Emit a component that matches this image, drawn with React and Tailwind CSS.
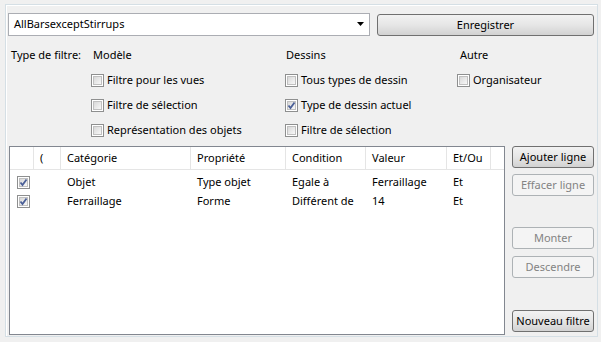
import React from "react";

const F = { fontFamily: '"Noto Sans", "Open Sans", sans-serif' };

function Check({ checked }) {
  return (
    <span className="relative inline-block w-[13px] h-[13px] border border-[#8e8f8f] bg-white shrink-0">
      <span className="absolute inset-[1px] bg-gradient-to-br from-[#d8d8d8] to-[#f8f8f8] border border-[#c0c0c0]" />
      {checked && (
        <svg className="absolute inset-0" width="11" height="11" viewBox="0 0 11 11">
          <path d="M2.5 5.5 L4.5 8 L8.5 2.5" fill="none" stroke="#4a5f97" strokeWidth="1.8" />
        </svg>
      )}
    </span>
  );
}

function CB({ label, checked }) {
  return (
    <div className="flex items-center h-[25px]">
      <Check checked={checked} />
      <span className="ml-[3px]">{label}</span>
    </div>
  );
}

function Btn({ children, disabled, className = "" }) {
  return (
    <div
      className={
        "h-[22px] flex items-center justify-center whitespace-nowrap rounded-[3px] border " +
        (disabled
          ? "border-[#adb2b5] bg-[#f4f4f4] text-[#838383] "
          : "border-[#707070] bg-gradient-to-b from-[#f2f2f2] via-[#e6e6e6] to-[#d2d2d2] text-black ") +
        className
      }
    >
      {children}
    </div>
  );
}

export default function App() {
  const cols = [
    { w: 24, t: "" },
    { w: 27, t: "(" },
    { w: 130, t: "Catégorie" },
    { w: 95, t: "Propriété" },
    { w: 80, t: "Condition" },
    { w: 81, t: "Valeur" },
    { w: 44, t: "Et/Ou" },
  ];
  const rows = [
    ["Objet", "Type objet", "Egale à", "Ferraillage", "Et"],
    ["Ferraillage", "Forme", "Différent de", "14", "Et"],
  ];
  return (
    <div className="w-[601px] h-[342px] bg-[#f0f0f0] pt-[4px] pl-[5px] text-[11px] text-black" style={F}>
      <div className="w-[593px] h-[333px] border border-[#d5dfe5] shadow-[inset_1px_1px_0_#ffffff] flex flex-col">
        {/* row 1 */}
        <div className="flex items-start mt-[8px] ml-[2px]">
          <div className="relative w-[362px] h-[23px] bg-white border border-[#abadb3] flex items-center pl-[5px]">
            AllBarsexceptStirrups
            <svg className="absolute right-[4px] top-[8px]" width="8" height="5" viewBox="0 0 8 5">
              <path d="M0 0 H7 L3.5 4 Z" fill="#000" />
            </svg>
          </div>
          <Btn className="ml-[7px] mt-[1px] w-[217px]">Enregistrer</Btn>
        </div>
        {/* filter section */}
        <div className="flex mt-[11px]">
          <div className="w-[85px] pl-[5px] h-[16px] leading-[16px]">Type de filtre:</div>
          <div className="w-[194px]">
            <div className="h-[16px] leading-[16px] pl-[2px] mb-[5px]">Modèle</div>
            <CB label="Filtre pour les vues" />
            <CB label="Filtre de sélection" />
            <CB label="Représentation des objets" />
          </div>
          <div className="w-[172px]">
            <div className="h-[16px] leading-[16px] pl-[1px] mb-[5px]">Dessins</div>
            <CB label="Tous types de dessin" />
            <CB label="Type de dessin actuel" checked />
            <CB label="Filtre de sélection" />
          </div>
          <div>
            <div className="h-[16px] leading-[16px] pl-[3px] mb-[5px]">Autre</div>
            <CB label="Organisateur" />
          </div>
        </div>
        {/* table + buttons */}
        <div className="flex mt-[3px] ml-[3px]">
          <div className="w-[496px] h-[189px] bg-white border border-[#828790] flex flex-col">
            <div className="flex h-[23px] border-b border-[#e5e5e5] mb-[3px]">
              {cols.map((c, i) => (
                <div
                  key={i}
                  className="h-full flex items-center pl-[6px] border-r border-[#e5e5e5] shrink-0"
                  style={{ width: c.w }}
                >
                  {c.t}
                </div>
              ))}
            </div>
            {rows.map((r, i) => (
              <div key={i} className="flex h-[19px] items-center">
                <div className="w-[24px] flex justify-center pl-[2px] shrink-0">
                  <Check checked />
                </div>
                <div className="w-[27px] shrink-0" />
                <div className="w-[130px] pl-[6px] shrink-0">{r[0]}</div>
                <div className="w-[95px] pl-[6px] shrink-0">{r[1]}</div>
                <div className="w-[80px] pl-[6px] shrink-0">{r[2]}</div>
                <div className="w-[81px] pl-[6px] shrink-0">{r[3]}</div>
                <div className="w-[44px] pl-[6px] shrink-0">{r[4]}</div>
              </div>
            ))}
          </div>
          <div className="ml-[7px] w-[82px] flex flex-col">
            <Btn>Ajouter ligne</Btn>
            <Btn disabled className="mt-[6px]">Effacer ligne</Btn>
            <Btn disabled className="mt-[31px]">Monter</Btn>
            <Btn disabled className="mt-[7px]">Descendre</Btn>
            <Btn className="mt-[32px]">Nouveau filtre</Btn>
          </div>
        </div>
      </div>
    </div>
  );
}
